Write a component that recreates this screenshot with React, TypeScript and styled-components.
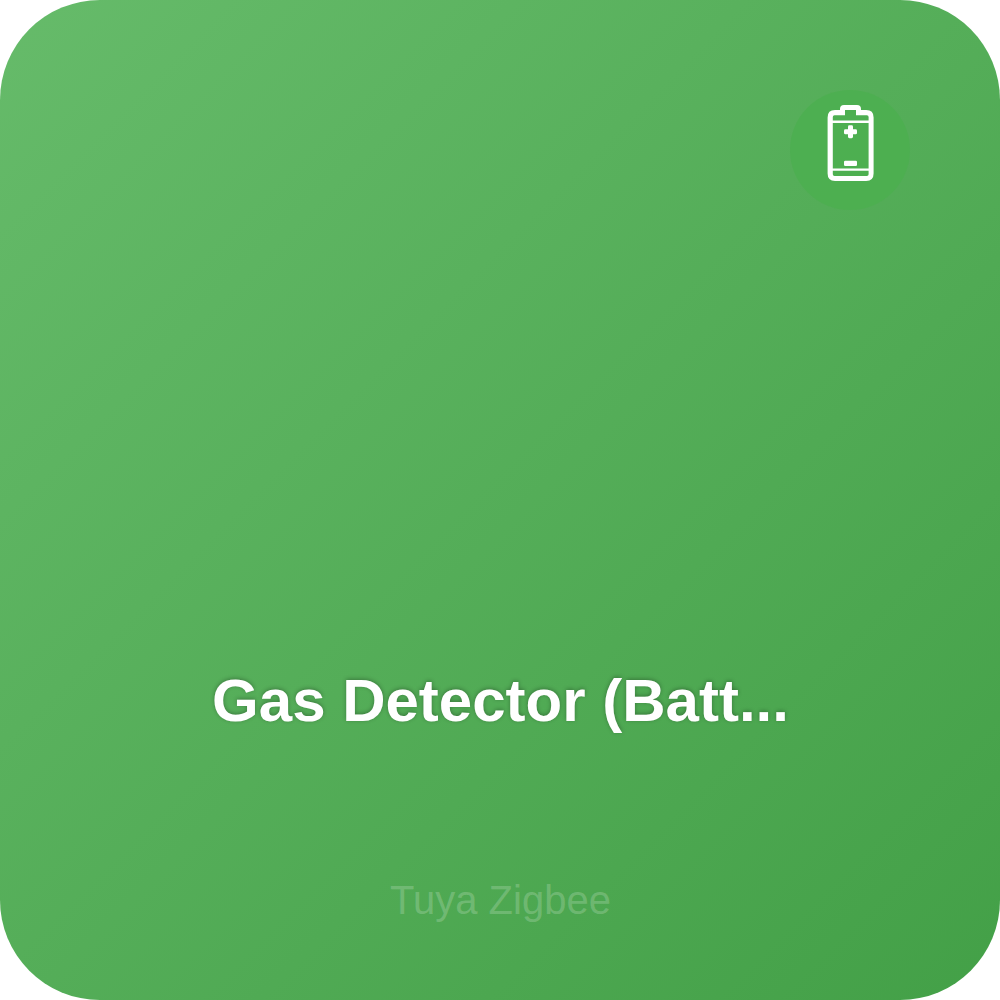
import React from "react";
import styled, { createGlobalStyle } from "styled-components";

const GlobalStyle = createGlobalStyle`
  body {
    margin: 0;
    background: #ffffff;
  }
`;

const Tile = styled.main`
  box-sizing: border-box;
  display: flex;
  flex-direction: column;
  width: 1000px;
  height: 1000px;
  padding: 90px;
  border-radius: 100px;
  background: linear-gradient(135deg, #66bb6a 0%, #43a047 100%);
  font-family: Arial, "Liberation Sans", sans-serif;
  text-align: center;
  white-space: nowrap;
`;

const Badge = styled.div`
  display: flex;
  align-self: flex-end;
  width: 120px;
  height: 120px;
  border-radius: 50%;
  background: rgba(76, 175, 80, 0.9);
`;

const Title = styled.h1`
  margin: 457px 0 0;
  padding-left: 1px;
  font-size: 60px;
  line-height: 68px;
  font-weight: 700;
  color: #ffffff;
  text-shadow: 0 -1px 4px rgba(0, 0, 0, 0.3);
`;

const Brand = styled.p`
  margin: 142px 0 0;
  padding-left: 1px;
  font-size: 40px;
  line-height: 46px;
  color: rgba(255, 255, 255, 0.2);
`;

function BatteryIcon() {
  return (
    <svg width="120" height="120" viewBox="0 0 120 120" fill="#fff" aria-hidden="true">
      <path
        fillRule="evenodd"
        d="M44.5 20H50V19Q50 15 54 15H67Q71 15 71 19V20H76.2Q83.6 20 83.6 27.4V83.6Q83.6 91 76.2 91H45Q37.6 91 37.6 83.6V27.4Q37.6 20 45 20ZM55 20V25.3H44.5Q42.8 25.3 42.8 27V84.3Q42.8 86 44.5 86H76.9Q78.6 86 78.6 84.3V27Q78.6 25.3 76.9 25.3H66V20Z"
      />
      <path d="M42 30.6H79V32.9H42ZM42 78.5H79V80.8H42Z" />
      <rect x="54" y="39.2" width="13" height="5.1" rx="1.4" />
      <rect x="58" y="35.2" width="5" height="13" rx="1.4" />
      <rect x="54" y="70.8" width="13" height="5.1" rx="1.2" />
    </svg>
  );
}

export default function App() {
  return (
    <>
      <GlobalStyle />
      <Tile>
        <Badge>
          <BatteryIcon />
        </Badge>
        <Title>Gas Detector (Batt...</Title>
        <Brand>Tuya Zigbee</Brand>
      </Tile>
    </>
  );
}
